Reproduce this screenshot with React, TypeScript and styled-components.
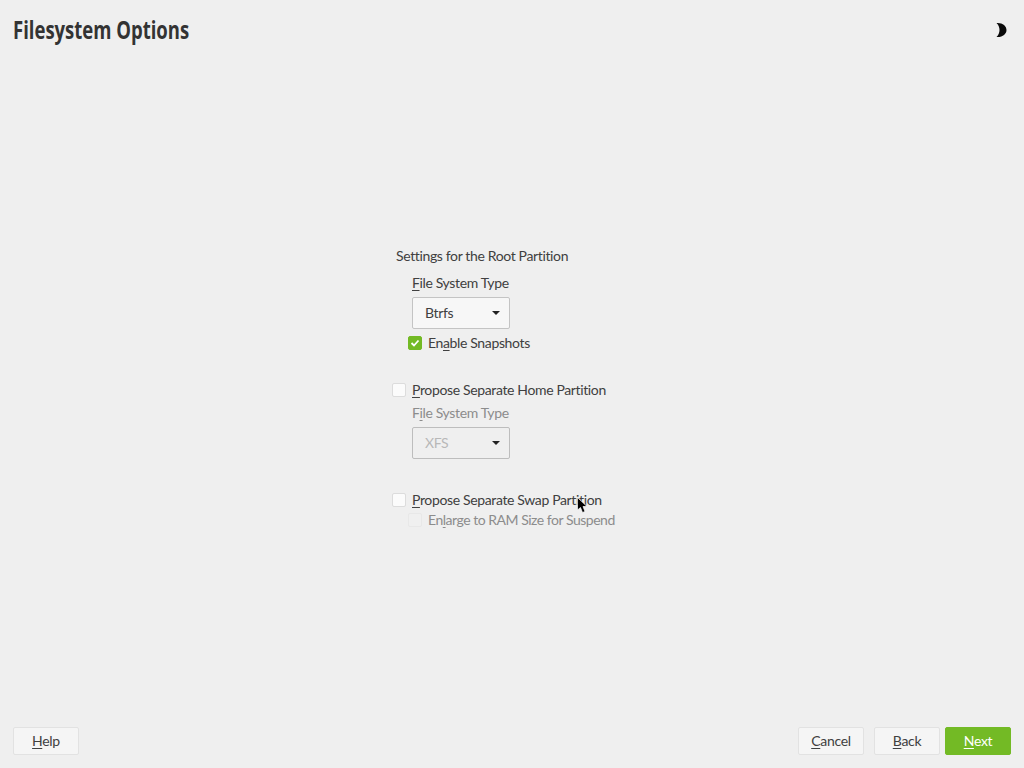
import React from "react";
import styled, { createGlobalStyle } from "styled-components";

const Global = createGlobalStyle`
  html, body { margin: 0; padding: 0; background: #efefef; }
  body { font-family: "Lato", "Open Sans", sans-serif; }
`;
const Page = styled.div`
  width: 1024px; height: 768px; display: flex; flex-direction: column;
  background: #efefef; color: #404040; font-size: 14px; letter-spacing: -0.36px;
  position: relative; overflow: hidden;
`;
const Header = styled.header`
  height: 60px; flex: none; display: flex; align-items: center; justify-content: space-between;
  padding: 0 17px 0 13px; box-sizing: border-box;
`;
const Title = styled.h1`
  margin: -2px 0 0; font-family: "Open Sans", sans-serif; font-size: 25px; font-weight: 700; color: #333333;
  letter-spacing: 0; white-space: nowrap; transform: scaleX(0.74); transform-origin: left center;
`;
const Main = styled.main`
  flex: 1; display: flex; flex-direction: column; align-items: flex-start;
  padding: 186px 0 0 392px; box-sizing: border-box;
`;
const Label = styled.div<{ $indent?: number; $off?: boolean; $top?: number }>`
  height: 20px; line-height: 20px; white-space: nowrap;
  margin-left: ${(p) => p.$indent ?? 0}px; margin-top: ${(p) => p.$top ?? 0}px;
  color: ${(p) => (p.$off ? "#8c8c8c" : "#404040")};
`;
const Section = styled(Label)`
  margin-bottom: 7px;
`;
const Key = styled.span`
  text-decoration: underline; text-underline-offset: 2px; text-decoration-thickness: 1px;
`;
const Combo = styled.div<{ $off?: boolean }>`
  width: 98px; height: 32px; box-sizing: border-box; margin: 4px 0 4px 20px;
  display: flex; align-items: center; justify-content: space-between; padding: 0 9px 2px 12px;
  background: ${(p) => (p.$off ? "#efefef" : "#f7f7f7")};
  border: 1px solid ${(p) => (p.$off ? "#bdbdbd" : "#c4c4c4")}; border-radius: 2px;
  color: ${(p) => (p.$off ? "#b8b8b8" : "#404040")};
`;
const Caret = styled.span`
  width: 0; height: 0; border-left: 4px solid transparent; border-right: 4px solid transparent;
  border-top: 4px solid #222222; margin-top: 2px;
`;
const CheckRow = styled.div<{ $indent?: number; $top?: number }>`
  display: flex; align-items: center; gap: 6px; height: 20px; line-height: 20px;
  margin-left: ${(p) => p.$indent ?? 0}px; margin-top: ${(p) => p.$top ?? 0}px;
`;
const CheckText = styled.span<{ $off?: boolean }>`
  height: 20px; white-space: nowrap; color: ${(p) => (p.$off ? "#8c8c8c" : "#404040")};
  letter-spacing: ${(p) => (p.$off ? "-0.48px" : "-0.36px")};
`;
const Box = styled.span<{ $on?: boolean; $off?: boolean }>`
  width: 14px; height: 14px; box-sizing: border-box; border-radius: 2px; flex: none;
  display: flex; align-items: center; justify-content: center;
  background: ${(p) => (p.$on ? "#73ba25" : p.$off ? "#f0f0f0" : "#fbfbfb")};
  border: 1px solid ${(p) => (p.$on ? "#73ba25" : p.$off ? "#e8e8e8" : "#dcdcdc")};
`;
const Footer = styled.footer`
  height: 53px; flex: none; display: flex; align-items: flex-start; padding: 12px 13px 0; box-sizing: border-box;
`;
const Button = styled.button<{ $primary?: boolean; $gap?: number }>`
  width: 66px; height: 28px; padding: 0 0 1px; box-sizing: border-box; border-radius: 2px;
  margin-left: ${(p) => p.$gap ?? 0}px;
  font: inherit; font-size: 14px; letter-spacing: -0.3px;
  background: ${(p) => (p.$primary ? "#73ba25" : "#f5f5f5")};
  border: 1px solid ${(p) => (p.$primary ? "#73ba25" : "#e2e2e2")};
  color: ${(p) => (p.$primary ? "#ffffff" : "#404040")};
`;
const Spacer = styled.div`flex: 1;`;
const Cursor = styled.svg`
  position: absolute; left: 577px; top: 497px;
`;

export default function App() {
  return (
    <Page>
      <Global />
      <Header>
        <Title>Filesystem Options</Title>
        <svg width="12" height="16" viewBox="0 0 12 16">
          <path d="M1.5 1 C7.5 0.5 11.5 4 11.5 8 C11.5 12 7.5 15.5 1.5 15 C4 12.5 4.5 10 4.5 8 C4.5 6 4 3.5 1.5 1 Z" fill="#0a0a0a" />
        </svg>
      </Header>
      <Main>
        <Section $indent={4}>Settings for the Root Partition</Section>
        <Label $indent={20}><Key>F</Key>ile System Type</Label>
        <Combo>Btrfs<Caret /></Combo>
        <CheckRow $indent={16}>
          <Box $on>
            <svg width="10" height="10" viewBox="0 0 10 10">
              <path d="M1.5 5 L4 7.5 L8.5 2.5" fill="none" stroke="#ffffff" strokeWidth="1.8" />
            </svg>
          </Box>
          <CheckText>En<Key>a</Key>ble Snapshots</CheckText>
        </CheckRow>
        <CheckRow $top={27}>
          <Box />
          <CheckText><Key>P</Key>ropose Separate Home Partition</CheckText>
        </CheckRow>
        <Label $indent={20} $off $top={3}>F<Key>i</Key>le System Type</Label>
        <Combo $off>XFS<Caret /></Combo>
        <CheckRow $top={27}>
          <Box />
          <CheckText><Key>P</Key>ropose Separate Swap Partition</CheckText>
        </CheckRow>
        <CheckRow $indent={16}>
          <Box $off />
          <CheckText $off>En<Key>l</Key>arge to RAM Size for Suspend</CheckText>
        </CheckRow>
      </Main>
      <Footer>
        <Button><Key>H</Key>elp</Button>
        <Spacer />
        <Button><Key>C</Key>ancel</Button>
        <Button $gap={10}><Key>B</Key>ack</Button>
        <Button $gap={5} $primary><Key>N</Key>ext</Button>
      </Footer>
      <Cursor width="12" height="18" viewBox="0 0 12 18">
        <path d="M0.5 0.5 L0.5 13 L3.5 10.5 L5.5 15.5 L8 14.5 L6 9.5 L10 9.5 Z" fill="#000000" stroke="#ffffff" strokeWidth="0.7" />
      </Cursor>
    </Page>
  );
}
